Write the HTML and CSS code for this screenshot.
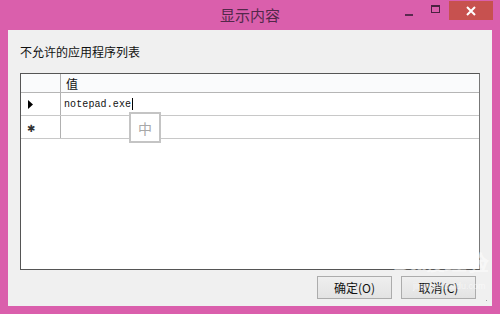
FILE: index.html
```html
<!DOCTYPE html>
<html lang="zh">
<head>
    <meta charset="UTF-8">
    <title>显示内容</title>
    <link rel="stylesheet" href="styles.css">
</head>
<body>
    <div class="window">
        <div class="titlebar">
            <span class="title">显示内容</span>
            <div class="controls">
                <span class="btn-min"><i></i></span>
                <span class="btn-max"><i></i></span>
                <span class="btn-close">
                    <svg width="12" height="12" viewBox="0 0 12 12"><path d="M2 2L10 10M10 2L2 10" stroke="#fff" stroke-width="2"/></svg>
                </span>
            </div>
        </div>
        <div class="panel">
            <div class="caption">不允许的应用程序列表</div>
            <div class="grid">
                <div class="row head">
                    <div class="rh"></div>
                    <div class="cell">值</div>
                </div>
                <div class="row">
                    <div class="rh">
                        <svg width="6" height="9" viewBox="0 0 6 9"><path d="M0 0L5 4.5L0 9Z" fill="#000"/></svg>
                    </div>
                    <div class="cell mono">notepad.exe<span class="caret"></span></div>
                </div>
                <div class="row last">
                    <div class="rh star">✱</div>
                    <div class="cell"></div>
                </div>
                <div class="ime">中</div>
            </div>
            <div class="buttons">
                <button class="btn">确定(O)</button>
                <button class="btn">取消(C)</button>
            </div>
            <div class="watermark">Bai<b>度</b>经验<small>jingyan.baidu.com</small></div>
            <div class="grip"></div>
        </div>
    </div>
</body>
</html>
```

FILE: styles.css
```css
body {
    margin: 0;
    background: #da5fac;
    font-family: "Noto Sans CJK SC", "Noto Sans", sans-serif;
}
.window {
    width: 500px;
    height: 314px;
    display: flex;
    flex-direction: column;
    background: #da5fac;
}
.titlebar {
    height: 30px;
    position: relative;
    display: flex;
    justify-content: center;
    align-items: center;
}
.title {
    font-size: 15px;
    color: #52284a;
    margin-top: -2px;
}
.controls {
    position: absolute;
    right: 7px;
    top: 1px;
    display: flex;
}
.btn-min, .btn-max {
    width: 27px;
    height: 19px;
    display: flex;
    justify-content: center;
    align-items: center;
}
.btn-min i {
    width: 8px;
    height: 2px;
    background: #5a2a4f;
    margin-top: 8px;
}
.btn-max i {
    width: 7px;
    height: 5px;
    border: 1px solid #4a2241;
    border-top-width: 2px;
    margin-top: -3px;
}
.btn-close {
    width: 44px;
    height: 19px;
    background: #c7514f;
    display: flex;
    justify-content: center;
    align-items: center;
}
.panel {
    position: relative;
    margin: 0 8px;
    height: 276px;
    background: #f0f0f0;
    padding: 0 12px;
    box-sizing: border-box;
}
.caption {
    padding-top: 14px;
    font-size: 12px;
    color: #111;
    line-height: 15px;
}
.grid {
    position: relative;
    margin-top: 14px;
    height: 197px;
    border: 1px solid #555;
    border-right-color: #777;
    background: #fff;
    box-sizing: border-box;
}
.row {
    display: flex;
    height: 23px;
    border-bottom: 1px solid #c8c8c8;
    box-sizing: border-box;
}
.row.head {
    height: 19px;
    background: #fafbfc;
    border-bottom-color: #b5b5b5;
}
.rh {
    width: 40px;
    border-right: 1px solid #b0b0b0;
    display: flex;
    align-items: center;
    padding-left: 7px;
    box-sizing: border-box;
}
.star {
    font-size: 10px;
    color: #333;
    padding-left: 6px;
}
.cell {
    flex: 1;
    display: flex;
    align-items: center;
    padding-left: 5px;
    font-size: 12px;
    color: #111;
}
.mono {
    font-family: "Liberation Mono", monospace;
    font-size: 10px;
    letter-spacing: 0.1px;
    padding-left: 3px;
}
.caret {
    width: 1px;
    height: 12px;
    background: #000;
    margin-left: 1px;
}
.ime {
    position: absolute;
    left: 108px;
    top: 38px;
    width: 28px;
    height: 27px;
    border: 2px solid #c4c4c4;
    background: #fff;
    color: #a8a8a8;
    font-size: 14px;
    display: flex;
    justify-content: center;
    align-items: center;
}
.buttons {
    display: flex;
    justify-content: flex-end;
    gap: 9px;
    margin-top: 6px;
    margin-right: 4px;
}
.btn {
    width: 75px;
    height: 23px;
    border: 1px solid #acacac;
    background: linear-gradient(#efefef, #e3e3e3);
    font-family: "Noto Sans CJK SC", sans-serif;
    font-size: 12px;
    color: #111;
    padding: 0;
}
.watermark {
    position: absolute;
    left: 385px;
    top: 222px;
    color: rgba(255, 255, 255, 0.55);
    font-family: "Liberation Sans", sans-serif;
    font-size: 22px;
    font-weight: bold;
    line-height: 22px;
}
.watermark b {
    font-size: 18px;
}
.watermark small {
    display: block;
    font-size: 9px;
    font-weight: normal;
    margin-left: 20px;
}
.grip {
    position: absolute;
    right: 3px;
    bottom: 3px;
    width: 7px;
    height: 7px;
    background: radial-gradient(circle, #a0a0a0 0.8px, transparent 1px) 0 0 / 3px 3px;
    clip-path: polygon(100% 0, 100% 100%, 0 100%);
}
```
